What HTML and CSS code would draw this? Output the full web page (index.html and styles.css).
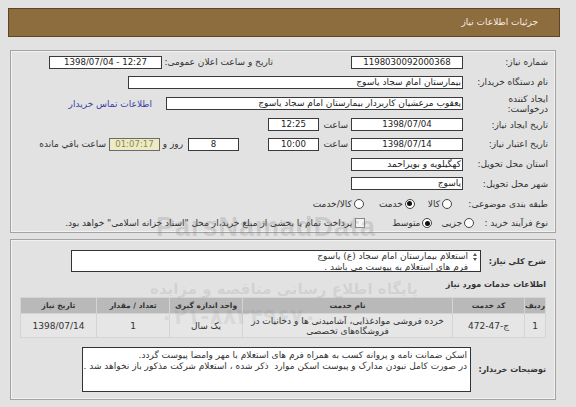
FILE: index.html
```html
<!DOCTYPE html>
<html lang="fa" dir="rtl">
<head>
<meta charset="utf-8">
<title>جزئیات اطلاعات نیاز</title>
<link rel="stylesheet" href="styles.css">
</head>
<body>
<div class="page">
  <div class="header">جزئیات اطلاعات نیاز</div>

  <div class="panel p1">
    <div class="row r20">
      <div class="lbl">شماره نیاز:</div>
      <div class="box w112">1198030092000368</div>
      <div class="lbl2">تاریخ و ساعت اعلان عمومی:</div>
      <div class="box w113" dir="ltr">1398/07/04 - 12:27</div>
    </div>
    <div class="row r20">
      <div class="lbl">نام دستگاه خریدار:</div>
      <div class="box wname txt">بیمارستان امام سجاد یاسوج</div>
    </div>
    <div class="row r23">
      <div class="lbl two">ایجاد کننده<br>درخواست:</div>
      <div class="box wcreator txt">یعقوب مرعشیان کاربردار بیمارستان امام سجاد یاسوج</div>
      <a class="link" href="#">اطلاعات تماس خریدار</a>
    </div>
    <div class="row r19">
      <div class="lbl">تاریخ ایجاد نیاز:</div>
      <div class="box w112">1398/07/04</div>
      <div class="saat">ساعت</div>
      <div class="box w51">12:25</div>
    </div>
    <div class="row r19">
      <div class="lbl">تاریخ اعتبار نیاز:</div>
      <div class="box w112">1398/07/14</div>
      <div class="saat">ساعت</div>
      <div class="box w51">10:00</div>
      <div class="box w51 days">8</div>
      <div class="rooz">روز و</div>
      <div class="box w51 remain">01:07:17</div>
      <div class="remain-lbl">ساعت باقي مانده</div>
    </div>
    <div class="row r20">
      <div class="lbl">استان محل تحویل:</div>
      <div class="box w112 txt">کهگیلویه و بویراحمد</div>
    </div>
    <div class="row r19">
      <div class="lbl">شهر محل تحویل:</div>
      <div class="box w112 txt">یاسوج</div>
    </div>
    <div class="row r20">
      <div class="lbl">طبقه بندی موضوعی:</div>
      <div class="opt first8"><span class="radio"></span><span>کالا</span></div>
      <div class="opt next8"><span class="radio on"></span><span>خدمت</span></div>
      <div class="opt next8b"><span class="radio"></span><span>کالا/خدمت</span></div>
    </div>
    <div class="row r19">
      <div class="lbl short">نوع فرآیند خرید :</div>
      <div class="opt"><span class="radio"></span><span>جزیی</span></div>
      <div class="opt next9"><span class="radio on"></span><span>متوسط</span></div>
      <div class="opt chk-opt"><span class="check"></span><span>پرداخت تمام یا بخشی از مبلغ خرید،از محل "اسناد خزانه اسلامی" خواهد بود.</span></div>
    </div>
  </div>

  <div class="panel p2">
    <div class="row desc-row">
      <div class="blbl w65">شرح کلي نياز:</div>
      <div class="area a1">
        <span class="spin"><span class="tri up"></span><span class="tri down"></span></span>
        <div class="area-text">استعلام بیمارستان امام سجاد (ع) یاسوج<br>فرم های استعلام به پیوست می باشد .</div>
      </div>
    </div>
    <div class="section-title">اطلاعات خدمات مورد نياز</div>
    <table class="grid">
      <colgroup>
        <col class="c1"><col class="c2"><col class="c3"><col class="c4"><col class="c5"><col class="c6">
      </colgroup>
      <thead>
        <tr><th>رديف</th><th>کد خدمت</th><th>نام خدمت</th><th>واحد اندازه گيری</th><th>تعداد / مقدار</th><th>تاريخ نياز</th></tr>
      </thead>
      <tbody>
        <tr><td>1</td><td>ج-47-472</td><td>خرده فروشی موادغذایی، آشامیدنی ها و دخانیات در<br>فروشگاه‌های تخصصی</td><td>یک سال</td><td>1</td><td>1398/07/14</td></tr>
      </tbody>
    </table>
    <div class="row notes-row">
      <div class="blbl w75">توضیحات خریدار:</div>
      <div class="area a2">
        <div class="area-text">اسکن ضمانت نامه و پروانه کسب به همراه فرم های استعلام با مهر وامضا پیوست گردد.<br>در صورت کامل نبودن مدارک و پیوست اسکن موارد&nbsp; ذکر شده ، استعلام شرکت مذکور باز نخواهد شد .</div>
      </div>
    </div>
  </div>
</div>
<div class="wm" aria-hidden="true">
  <div class="wm-latin" dir="ltr">ParsNamadData</div>
  <div class="wm-fa">پایگاه اطلاع رسانی مناقصه و مزایده</div>
  <div class="wm-tel" dir="ltr">۰۲۱-۸۸۳۴۹۶۷۰</div>
</div>
</body>
</html>
```
FILE: styles.css
```css
* { box-sizing: border-box; }
html, body { margin: 0; padding: 0; }
body {
  background: #e2e2e2;
  font-family: "DejaVu Sans", sans-serif;
  font-size: 9px;
  color: #333;
  direction: rtl;
  width: 576px;
  height: 407px;
  overflow: hidden;
  position: relative;
}
.page { padding: 8px 16px 0 8px; width: 576px; }
.header {
  height: 29px;
  background: #8d6c3e;
  border: 1px solid #5e4526;
  color: #f4efe6;
  padding-right: 21px;
  line-height: 27px;
  font-size: 9px;
}
.panel {
  margin: 13px 4px 0 2px;
  border: 1px solid #a3a3a3;
  box-shadow: inset 0 0 0 1px #f1f1f1;
  background: #e2e2e2;
}
.p1 { height: 183px; padding: 1px 7px 0 0; }
.p2 { margin-top: 6px; height: 161px; padding: 10px 9px 0 0; }
.row { display: flex; align-items: center; }
.r20 { height: 20px; }
.r19 { height: 19.5px; }
.r23 { height: 23px; }
.lbl { width: 85px; flex: none; white-space: nowrap; color: #333; }
.lbl.two { line-height: 10px; }
.lbl.short { width: 74px; }
.box {
  flex: none;
  height: 13px;
  border: 1px solid #3a3a3a;
  background: #fff;
  line-height: 11px;
  font-size: 8.6px;
  text-align: center;
  white-space: nowrap;
  overflow: hidden;
  color: #222;
}
.box.txt { text-align: right; padding-right: 1px; font-size: 9px; }
.w112 { width: 112px; }
.w113 { width: 113px; margin-right: 1px; }
.w51 { width: 51px; }
.wname { width: 335px; }
.wcreator { width: 297px; }
.lbl2 { width: 110px; margin-right: 78px; flex: none; white-space: nowrap; }
.link { margin-right: 14px; color: #3b3fa6; text-decoration: none; white-space: nowrap; }
.saat { width: 32px; padding-right: 3px; flex: none; }
.days { margin-right: 29px; }
.rooz { width: 28px; padding-right: 5px; flex: none; white-space: nowrap; }
.remain { background: #ecebc4; color: #8a8a52; border-color: #6a6a6a; }
.remain-lbl { padding-right: 3px; white-space: nowrap; }
.opt { display: flex; align-items: center; gap: 2px; flex: none; white-space: nowrap; }
.first8 { margin-right: 11px; }
.next8 { margin-right: 13px; }
.next8b { margin-right: 15px; }
.next9 { margin-right: 9px; }
.chk-opt { margin-right: 27px; gap: 3px; }
.radio {
  width: 10px; height: 10px;
  border: 1px solid #444;
  border-radius: 50%;
  background: #fff;
  position: relative;
  flex: none;
}
.radio.on::after {
  content: "";
  position: absolute;
  left: 1.5px; top: 1.5px;
  width: 5px; height: 5px;
  border-radius: 50%;
  background: #111;
}
.check {
  width: 10px; height: 10px;
  border: 1px solid #888;
  background: #f4f4f4;
  flex: none;
}
.blbl { flex: none; font-weight: bold; font-size: 8px; color: #333; white-space: nowrap; }
.w65 { width: 65px; }
.w75 { width: 75px; }
.desc-row { height: 22px; }
.area {
  flex: none;
  border: 1px solid #333;
  background: #fff;
  position: relative;
  overflow: hidden;
  color: #333;
}
.a1 { width: 410px; height: 22px; padding: 0 12px 0 0; }
.a2 { width: 389px; height: 45px; padding: 2px 3px 0 0; }
.area-text { line-height: 10.5px; white-space: nowrap; }
.spin {
  position: absolute;
  right: 3px; top: 2px;
  width: 5px;
  display: flex;
  flex-direction: column;
  gap: 2px;
}
.tri { width: 0; height: 0; border-left: 2.5px solid transparent; border-right: 2.5px solid transparent; }
.tri.up { border-bottom: 3px solid #555; }
.tri.down { border-top: 3px solid #555; }
.section-title {
  margin-top: 7px;
  height: 11px;
  line-height: 11px;
  font-weight: bold;
  font-size: 8px;
  color: #333;
}
.grid {
  margin-top: 7px;
  width: 525px;
  border-collapse: collapse;
  table-layout: fixed;
  background: #e6e6e6;
}
.c1 { width: 21px; } .c2 { width: 72px; } .c3 { width: 210px; }
.c4 { width: 73px; } .c5 { width: 73px; } .c6 { width: 76px; }
.grid th {
  height: 16px;
  background: #b9b9b9;
  font-size: 7.5px;
  font-weight: bold;
  color: #333;
  border: 1px solid #d4d4d4;
  padding: 0;
}
.grid td {
  height: 24px;
  text-align: center;
  border: 1px solid #d4d4d4;
  background: #e6e6e6;
  padding: 0;
  line-height: 10px;
  color: #333;
}
.notes-row { margin-top: 9px; height: 45px; }

/* faint watermark laid over the page */
.wm { position: absolute; inset: 0; pointer-events: none; }
.wm-latin {
  position: absolute;
  left: 156px; top: 212px;
  font-family: "Liberation Sans", sans-serif;
  font-weight: bold;
  font-size: 27px;
  letter-spacing: 1px;
  color: rgba(120, 120, 120, 0.22);
}
.wm-fa {
  position: absolute;
  left: 148px; top: 280px;
  width: 272px;
  text-align: center;
  font-size: 15px;
  font-weight: bold;
  color: rgba(120, 120, 120, 0.16);
  white-space: nowrap;
}
.wm-tel {
  position: absolute;
  left: 160px; top: 304px;
  font-size: 22px;
  font-weight: bold;
  color: rgba(120, 120, 120, 0.12);
}
```
